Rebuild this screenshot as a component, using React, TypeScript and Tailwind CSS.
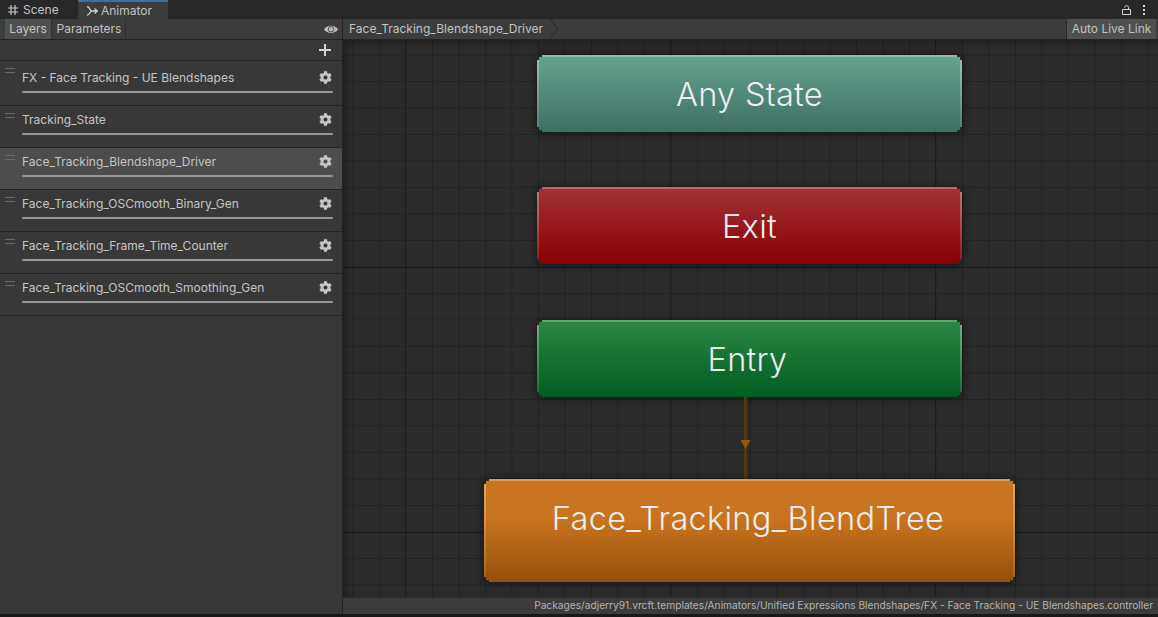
import React from "react";
import { FaCog } from "react-icons/fa";

const layers = [
  { name: "FX - Face Tracking - UE Blendshapes", first: true },
  { name: "Tracking_State" },
  { name: "Face_Tracking_Blendshape_Driver", active: true },
  { name: "Face_Tracking_OSCmooth_Binary_Gen" },
  { name: "Face_Tracking_Frame_Time_Counter" },
  { name: "Face_Tracking_OSCmooth_Smoothing_Gen" },
];

function LayerRow({ name, first, active }: { name: string; first?: boolean; active?: boolean }) {
  return (
    <div
      className={`relative flex flex-col border-b border-[#232323] pr-[9px] pl-[22px] ${
        first ? "h-[45px] pt-[9px]" : "h-[42px] pt-[6px]"
      } ${active ? "bg-[#4d4d4d]" : ""}`}
    >
      <div className="absolute top-[7px] left-[5px] h-[5px] w-[10px] border-y border-[#6a6a6a]" />
      <div className="flex h-[16px] items-center justify-between pr-[1px]">
        <span className="text-[12px] leading-4 text-[#c4c4c4]">{name}</span>
        <FaCog size={13} className="-translate-y-px text-[#c4c4c4]" />
      </div>
      <div className="mt-[5px] h-[2px] rounded-full bg-[#979797]" />
    </div>
  );
}

function Node({
  label,
  pos,
  colors,
  text,
}: {
  label: string;
  pos: string;
  colors: string;
  text: string;
}) {
  return (
    <div className={`absolute rounded-[5px] shadow-[0_1px_10px_rgba(0,0,0,0.55)] ${pos}`}>
      {/* stepped corners, the editor draws these at low res */}
      <div
        className={`relative flex h-full w-full items-center justify-center text-[32.5px] font-light tracking-[0.3px] text-[#eeeeee] [clip-path:polygon(5px_0,calc(100%-5px)_0,calc(100%-5px)_2px,calc(100%-2px)_2px,calc(100%-2px)_5px,100%_5px,100%_calc(100%-5px),calc(100%-2px)_calc(100%-5px),calc(100%-2px)_calc(100%-2px),calc(100%-5px)_calc(100%-2px),calc(100%-5px)_100%,5px_100%,5px_calc(100%-2px),2px_calc(100%-2px),2px_calc(100%-5px),0_calc(100%-5px),0_5px,2px_5px,2px_2px,5px_2px)] ${colors} ${text}`}
      >
        <div className="absolute top-0 right-0 left-0 h-[2px] bg-white/25" />
        <div className="absolute top-0 bottom-0 left-0 w-[2px] bg-[linear-gradient(to_bottom,rgba(255,255,255,0.35),rgba(255,255,255,0.08))]" />
        <div className="absolute top-0 right-0 bottom-0 w-[2px] bg-[linear-gradient(to_bottom,rgba(255,255,255,0.35),rgba(255,255,255,0.08))]" />
        {label}
      </div>
    </div>
  );
}

export default function App() {
  return (
    <div className="flex h-[617px] w-[1158px] flex-col overflow-hidden bg-[#191919] font-['Inter','Liberation_Sans',sans-serif]">
      {/* tab strip */}
      <div className="flex h-[19px] items-stretch bg-[#282828] text-[12px] text-[#c2c2c2]">
        <div className="flex w-[78px] items-center gap-[5px] pl-[8px]">
          <svg width="10" height="10" viewBox="0 0 10 10" fill="none" stroke="#c8c8c8" strokeWidth="1.2">
            <path d="M3 0 V10 M7 0 V10 M0 3 H10 M0 7 H10" />
          </svg>
          <span>Scene</span>
        </div>
        <div className="flex w-[90px] items-center gap-[3px] border-t-2 border-[#3a6ea5] bg-[#3c3c3c] pl-[9px]">
          <svg width="11" height="10" viewBox="0 0 11 10" fill="none" stroke="#d0d0d0" strokeWidth="1.3">
            <path d="M0 0.7 C2 0.7 3 3 4 5 H10 M7.5 2.5 L10.2 5 L7.5 7.5 M4 5 C3 7 2 9 0 9" />
          </svg>
          <span>Animator</span>
        </div>
        <div className="ml-auto flex items-center gap-[12px] pr-[13px]">
          <svg width="9" height="10" viewBox="0 0 9 10" fill="none" stroke="#d4d4d4" strokeWidth="1">
            <path d="M0.5 4.5 H8.5 V9.5 H0.5 Z M6.5 4.5 V2.5 C6.5 0 2.8 0 2.5 2.5" />
          </svg>
          <div className="flex flex-col gap-[2px]">
            <div className="h-[2px] w-[2px] bg-[#d4d4d4]" />
            <div className="h-[2px] w-[2px] bg-[#d4d4d4]" />
            <div className="h-[2px] w-[2px] bg-[#d4d4d4]" />
          </div>
        </div>
      </div>

      <div className="flex min-h-0 flex-1">
        {/* layers panel */}
        <div className="flex w-[343px] flex-col border-r border-[#232323] bg-[#383838]">
          <div className="flex h-[21px] items-stretch border-b border-[#232323] bg-[#3c3c3c] pl-[5px] text-[12px] text-[#c2c2c2]">
            <div className="flex w-[47px] items-center justify-center border-r border-[#303030] bg-[#505050]">Layers</div>
            <div className="flex w-[74px] items-center justify-center border-r border-[#303030] pl-[1px]">Parameters</div>
            <div className="ml-auto flex items-center pr-[4px]">
              <svg width="14" height="9" viewBox="0 0 14 9">
                <path d="M0 4.5 C3 -0.5 11 -0.5 14 4.5 C11 9 3 9 0 4.5 Z" fill="#bdbdbd" />
                <circle cx="7" cy="4.3" r="2.7" fill="#bdbdbd" stroke="#4a4a4a" strokeWidth="1" />
              </svg>
            </div>
          </div>
          <div className="flex h-[21px] items-center justify-end border-b border-[#232323] pr-[11px]">
            <svg width="12" height="12" viewBox="0 0 12 12" fill="none" stroke="#d2d2d2" strokeWidth="2">
              <path d="M6 0 V12 M0 6 H12" />
            </svg>
          </div>
          {layers.map((l) => (
            <LayerRow key={l.name} {...l} />
          ))}
        </div>

        {/* graph */}
        <div className="flex min-w-0 flex-1 flex-col">
          <div className="flex h-[21px] items-stretch border-b border-[#232323] bg-[#3c3c3c] pr-[2px] text-[12px] text-[#c2c2c2]">
            <div className="flex items-center pr-[7px] pl-[6px]">Face_Tracking_Blendshape_Driver</div>
            <svg width="10" height="20" viewBox="0 0 10 20" fill="none" stroke="#2a2a2a" strokeWidth="1">
              <path d="M0 0 L8 10 L0 20" />
            </svg>
            <div className="ml-auto flex w-[90px] items-center justify-center border-l border-[#2a2a2a] bg-[#505050]">
              Auto Live Link
            </div>
          </div>
          <div className="relative min-h-0 flex-1 overflow-hidden bg-[#2b2b2b] bg-[linear-gradient(to_right,#1d1d1d_1px,transparent_1px),linear-gradient(to_bottom,#1a1a1a_1px,transparent_1px),linear-gradient(to_right,#222222_1px,transparent_1px),linear-gradient(to_bottom,#222222_1px,transparent_1px)] bg-[size:265px_265px,265px_265px,26.5px_26.5px,26.5px_26.5px] bg-[position:62px_227px,62px_227px,9.5px_14.5px,9.5px_14.5px] shadow-[inset_6px_6px_8px_-4px_rgba(0,0,0,0.35)]">
            <Node
              label="Any State"
              pos="top-[15px] left-[194px] h-[77px] w-[425px]"
              colors="bg-[linear-gradient(to_bottom,#65a48f,#3d6f65)]"
              text="pt-[3px]"
            />
            <Node
              label="Exit"
              pos="top-[147px] left-[194px] h-[77px] w-[425px]"
              colors="bg-[linear-gradient(to_bottom,#a33236,#8a0000)]"
              text="pt-[3px]"
            />
            <Node
              label="Entry"
              pos="top-[280px] left-[194px] h-[77px] w-[425px]"
              colors="bg-[linear-gradient(to_bottom,#2c8746,#005d20)]"
              text="pt-[3px] pr-[4px]"
            />
            {/* transition arrow */}
            <div className="absolute top-[357px] left-[401px] h-[83px] w-[3px] bg-[#4f3a10]" />
            <svg className="absolute top-[399px] left-[397px]" width="11" height="11" viewBox="0 0 11 11">
              <path d="M0.5 1 H10.5 L5.5 10 Z" fill="#8a5c06" />
            </svg>
            <Node
              label="Face_Tracking_BlendTree"
              pos="top-[439px] left-[141px] h-[103px] w-[531px]"
              colors="bg-[linear-gradient(to_bottom,#cb761f,#c8731e_40%,#93500c)]"
              text="pb-[23px] pr-[3px]"
            />
            <div className="absolute right-0 bottom-0 left-0 flex h-[17px] items-center justify-end border-t border-[#2d2d2d] bg-[#3c3c3c] pr-[5px] text-[10.2px] text-[#b4b4b4]">
              Packages/adjerry91.vrcft.templates/Animators/Unified Expressions Blendshapes/FX - Face Tracking - UE Blendshapes.controller
            </div>
          </div>
        </div>
      </div>
      <div className="h-[3px] bg-[#191919]" />
    </div>
  );
}
